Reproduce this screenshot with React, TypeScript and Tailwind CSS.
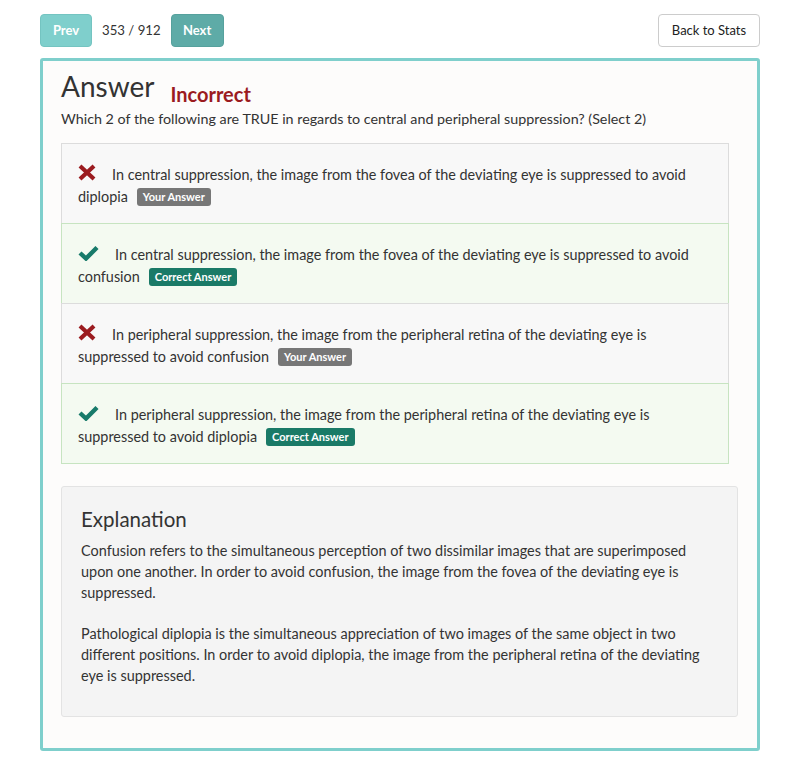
import React from "react";

function XIcon() {
  return (
    <svg width="18" height="17" viewBox="0 0 18 17" className="inline-block shrink-0">
      <path d="M2 2 L16 15 M16 2 L2 15" stroke="#9b1b1f" strokeWidth="4.2" strokeLinecap="butt" />
    </svg>
  );
}

function CheckIcon() {
  return (
    <svg width="21" height="16" viewBox="0 0 21 16" className="inline-block shrink-0">
      <path d="M2 8 L8 13.5 L19 2.5" stroke="#177a6a" strokeWidth="4.4" fill="none" strokeLinecap="butt" strokeLinejoin="miter" />
    </svg>
  );
}

type Opt = { text: string; last: string; correct: boolean };

const options: Opt[] = [
  {
    text: "In central suppression, the image from the fovea of the deviating eye is suppressed to avoid",
    last: "diplopia",
    correct: false,
  },
  {
    text: "In central suppression, the image from the fovea of the deviating eye is suppressed to avoid",
    last: "confusion",
    correct: true,
  },
  {
    text: "In peripheral suppression, the image from the peripheral retina of the deviating eye is",
    last: "suppressed to avoid confusion",
    correct: false,
  },
  {
    text: "In peripheral suppression, the image from the peripheral retina of the deviating eye is",
    last: "suppressed to avoid diplopia",
    correct: true,
  },
];

export default function App() {
  return (
    <div
      className="w-[800px] h-[775px] bg-white text-[#333]"
      style={{ fontFamily: "Lato, 'Open Sans', sans-serif" }}
    >
      <div className="pt-[14px] px-[40px] flex items-center justify-between">
        <div className="flex items-center gap-[10px]">
          <button className="h-[33px] w-[52px] rounded-[4px] bg-[#7fcfcc] border border-[#74c4c1] text-white text-[13px] font-bold">
            Prev
          </button>
          <span className="text-[13.2px] text-[#333]">353 / 912</span>
          <button className="h-[33px] w-[53px] rounded-[4px] bg-[#5eaba7] border border-[#56a19d] text-white text-[13px] font-bold">
            Next
          </button>
        </div>
        <button className="h-[33px] w-[102px] rounded-[4px] bg-white border border-[#ccc] text-[13px] text-[#222] pt-[1px]">
          Back to Stats
        </button>
      </div>

      <div className="mt-[11px] mx-[40px] h-[693px] border-[3px] border-[#7fcfcc] rounded-[3px] bg-[#fdfcfb] pl-[18px] pr-[19px] pt-[7px]">
        <div className="flex items-end">
          <h1 className="text-[28px] leading-[36px] text-[#333] font-normal">Answer</h1>
          <span className="ml-[16px] text-[20px] leading-[28px] font-bold text-[#9b1b1f] mb-[-4px]">
            Incorrect
          </span>
        </div>
        <p className="text-[14.3px] leading-[20px] mt-[5px]">
          Which 2 of the following are TRUE in regards to central and peripheral suppression? (Select 2)
        </p>

        <div className="mt-[14px] mr-[9px]">
          {options.map((o, i) => (
            <div
              key={i}
              className={
                "h-[81px] border pl-[16px] pr-[16px] pt-[20px] text-[14.4px] leading-[22px] " +
                (o.correct
                  ? "bg-[#f4faf1] border-[#c7e4c1]"
                  : "bg-[#f8f8f8] border-[#dcdcdc]") +
                (i > 0 ? " -mt-[1px]" : "")
              }
            >
              <span className="inline-flex items-center align-[-1px] mr-[16px]">
                {o.correct ? <CheckIcon /> : <XIcon />}
              </span>
              {o.text} {o.last}
              <span
                className={
                  "ml-[9px] inline-block align-[1px] rounded-[3px] px-[6px] text-[11px] leading-[18px] font-bold text-white " +
                  (o.correct ? "bg-[#1a7a67]" : "bg-[#777]")
                }
              >
                {o.correct ? "Correct Answer" : "Your Answer"}
              </span>
            </div>
          ))}
        </div>

        <div className="mt-[22px] h-[231px] bg-[#f4f4f4] border border-[#e3e3e3] rounded-[3px] px-[19px] pt-[18px]">
          <h2 className="text-[20.5px] leading-[28px] font-normal text-[#333]">Explanation</h2>
          <p className="mt-[7px] text-[14.45px] leading-[21px] text-[#333]">
            Confusion refers to the simultaneous perception of two dissimilar images that are superimposed upon one
            another. In order to avoid confusion, the image from the fovea of the deviating eye is suppressed.
          </p>
          <p className="mt-[20px] text-[14.45px] leading-[21px] text-[#333]">
            Pathological diplopia is the simultaneous appreciation of two images of the same object in two different
            positions. In order to avoid diplopia, the image from the peripheral retina of the deviating eye is
            suppressed.
          </p>
        </div>
      </div>
    </div>
  );
}
